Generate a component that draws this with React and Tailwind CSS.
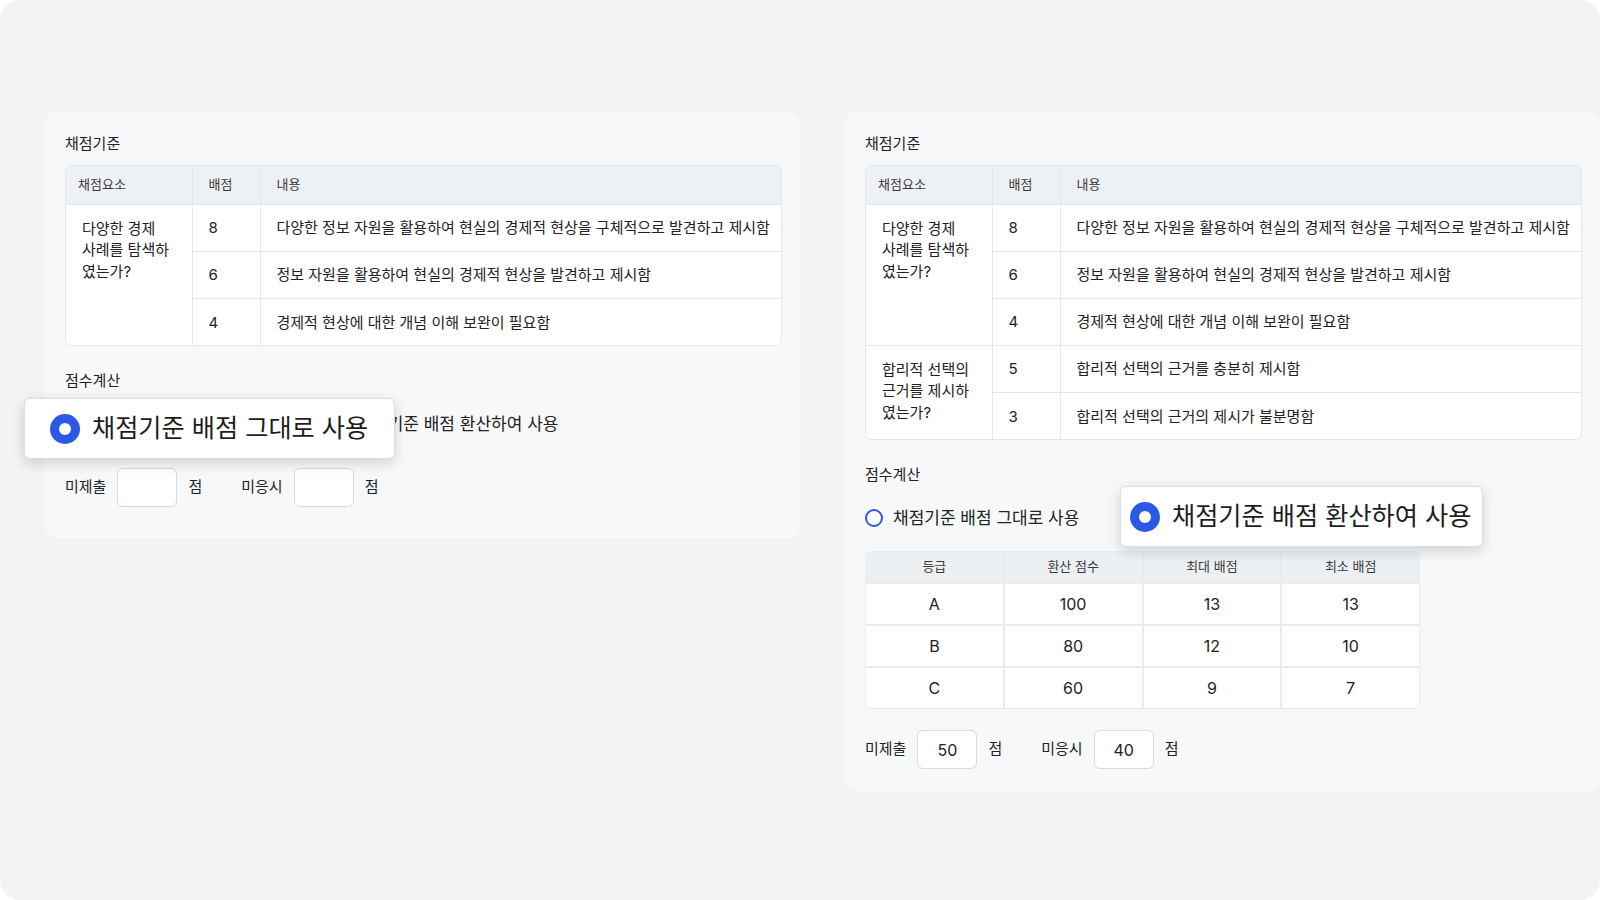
import React from "react";

const FONT = "font-['Inter','Noto_Sans_CJK_KR',sans-serif]";

function CriteriaTable({ groups }) {
  return (
    <div className="rounded-md border border-[#e3e6ea] overflow-hidden bg-white">
      <table className="w-full table-fixed border-collapse border-hidden">
        <colgroup>
          <col className="w-[126px]" />
          <col className="w-[68px]" />
          <col />
        </colgroup>
        <thead>
          <tr className="bg-[#edf0f4] h-[38px]">
            <th className="border border-[#e3e6ea] text-left font-normal text-[13px] text-[#3a3a3a] pl-3">채점요소</th>
            <th className="border border-[#e3e6ea] text-left font-normal text-[13px] text-[#3a3a3a] pl-4">배점</th>
            <th className="border border-[#e3e6ea] text-left font-normal text-[13px] text-[#3a3a3a] pl-4">내용</th>
          </tr>
        </thead>
        <tbody>
          {groups.map((g, gi) =>
            g.rows.map((r, ri) => (
              <tr key={gi + "-" + ri} className="h-[47px]">
                {ri === 0 && (
                  <td
                    rowSpan={g.rows.length}
                    className="border border-[#e3e6ea] align-top pl-4 pr-2 pt-[13px] text-[15px] leading-[21.5px] text-[#222]"
                  >
                    {g.title.map((t, i) => (
                      <div key={i} className="whitespace-nowrap">{t}</div>
                    ))}
                  </td>
                )}
                <td className="border border-[#e3e6ea] pl-4 pt-[2px] text-[15px] text-[#222]">{r[0]}</td>
                <td className="border border-[#e3e6ea] pl-4 pt-[2px] text-[15px] text-[#222] whitespace-nowrap">{r[1]}</td>
              </tr>
            ))
          )}
        </tbody>
      </table>
    </div>
  );
}

function Radio({ checked, label }) {
  return (
    <div className="flex items-center gap-[10px] h-6">
      {checked ? (
        <span className="w-[18px] h-[18px] rounded-full bg-[#2b58e6] flex items-center justify-center">
          <span className="w-[7px] h-[7px] rounded-full bg-white" />
        </span>
      ) : (
        <span className="w-[18px] h-[18px] rounded-full border-2 border-[#2f5be4] bg-white" />
      )}
      <span className="text-[17px] text-[#222] leading-6 whitespace-nowrap">{label}</span>
    </div>
  );
}

function Callout({ label, className }) {
  return (
    <div
      className={
        "absolute h-[61px] flex items-center gap-[12px] bg-white rounded-md border border-[#dcdde0] shadow-[0_4px_14px_rgba(0,0,0,0.16)] " +
        className
      }
    >
      <span className="w-[30px] h-[30px] rounded-full bg-[#2b58e6] flex items-center justify-center shrink-0">
        <span className="w-[12px] h-[12px] rounded-full bg-white" />
      </span>
      <span className="text-[25.2px] leading-none text-[#1e1e1e] whitespace-nowrap">{label}</span>
    </div>
  );
}

function ScoreInputs({ a, b }) {
  return (
    <div className="flex items-center text-[15px] text-[#222]">
      <span>미제출</span>
      <div className="ml-[11px] w-[60px] h-[39px] rounded-md border border-[#d5d8dd] bg-white flex items-center justify-center text-[16px]">
        {a}
      </div>
      <span className="ml-[11px]">점</span>
      <span className="ml-[39px]">미응시</span>
      <div className="ml-[11px] w-[60px] h-[39px] rounded-md border border-[#d5d8dd] bg-white flex items-center justify-center text-[16px]">
        {b}
      </div>
      <span className="ml-[11px]">점</span>
    </div>
  );
}

const group1 = {
  title: ["다양한 경제", "사례를 탐색하", "였는가?"],
  rows: [
    ["8", "다양한 정보 자원을 활용하여 현실의 경제적 현상을 구체적으로 발견하고 제시함"],
    ["6", "정보 자원을 활용하여 현실의 경제적 현상을 발견하고 제시함"],
    ["4", "경제적 현상에 대한 개념 이해 보완이 필요함"],
  ],
};
const group2 = {
  title: ["합리적 선택의", "근거를 제시하", "였는가?"],
  rows: [
    ["5", "합리적 선택의 근거를 충분히 제시함"],
    ["3", "합리적 선택의 근거의 제시가 불분명함"],
  ],
};

const grades = [
  ["A", "100", "13", "13"],
  ["B", "80", "12", "10"],
  ["C", "60", "9", "7"],
];

export default function App() {
  return (
    <div className={"w-[1600px] h-[900px] bg-white " + FONT}>
      <div className="w-full h-full rounded-[20px] bg-[#f2f3f5] overflow-hidden flex items-start gap-[45px] pl-[45px] pt-[112px]">
        {/* Left panel */}
        <div className="relative w-[755px] shrink-0 rounded-xl bg-[#f7f8fa] pl-5 pr-[18px] pt-5 pb-[31px]">
          <div className="text-[15px] leading-[22px] text-[#222] mb-[10px] pt-[1px]">채점기준</div>
          <CriteriaTable groups={[group1]} />
          <div className="mt-6 text-[15px] leading-[22px] text-[#222]">점수계산</div>
          <div className="mt-5 flex items-center gap-[49px]">
            <Radio checked label="채점기준 배점 그대로 사용" />
            <Radio label="채점기준 배점 환산하여 사용" />
          </div>
          <div className="mt-8">
            <ScoreInputs a="" b="" />
          </div>
          <Callout label="채점기준 배점 그대로 사용" className="left-[-21px] top-[286px] pl-[25px] pr-[26px]" />
        </div>

        {/* Right panel */}
        <div className="relative w-[755px] shrink-0 rounded-xl bg-[#f7f8fa] pl-5 pr-[18px] pt-5 pb-[22px]">
          <div className="text-[15px] leading-[22px] text-[#222] mb-[10px] pt-[1px]">채점기준</div>
          <CriteriaTable groups={[group1, group2]} />
          <div className="mt-6 text-[15px] leading-[22px] text-[#222]">점수계산</div>
          <div className="mt-5 flex items-center gap-[49px]">
            <Radio label="채점기준 배점 그대로 사용" />
            <Radio checked label="채점기준 배점 환산하여 사용" />
          </div>
          <div className="mt-[21px] w-[555px] rounded-md overflow-hidden border border-[#e9ebee] bg-[#e9ebee] grid grid-cols-4 gap-[2px]">
            {["등급", "환산 점수", "최대 배점", "최소 배점"].map((h) => (
              <div key={h} className="h-[30px] bg-[#edf0f3] flex items-center justify-center text-[13px] text-[#3a3a3a]">
                {h}
              </div>
            ))}
            {grades.flat().map((v, i) => (
              <div key={i} className="h-[40px] bg-white flex items-center justify-center text-[16px] text-[#222]">
                {v}
              </div>
            ))}
          </div>
          <div className="mt-[21px]">
            <ScoreInputs a="50" b="40" />
          </div>
          <Callout label="채점기준 배점 환산하여 사용" className="left-[275px] top-[374px] pl-[9px] pr-[11px]" />
        </div>
      </div>
    </div>
  );
}
